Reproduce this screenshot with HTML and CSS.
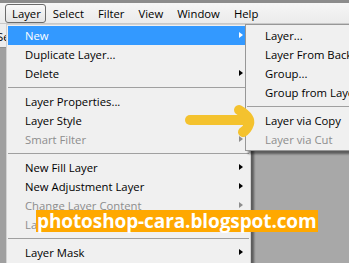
FILE: index.html
```html
<!DOCTYPE html>
<html lang="en">
<head>
  <meta charset="UTF-8">
  <meta name="viewport" content="width=device-width, initial-scale=1">
  <title>Layer menu</title>
  <link rel="stylesheet" href="styles.css">
</head>
<body>
  <div class="app">
    <div class="top-strip"></div>

    <nav class="menubar">
      <span class="menubar-item open">Layer</span>
      <span class="menubar-item">Select</span>
      <span class="menubar-item">Filter</span>
      <span class="menubar-item">View</span>
      <span class="menubar-item">Window</span>
      <span class="menubar-item">Help</span>
    </nav>

    <div class="workspace">
      <div class="side-panel">
        <div class="panel-tab">Se</div>
      </div>
      <div class="canvas-area"></div>
    </div>

    <!-- Layer menu -->
    <div class="menu menu-main">
      <div class="item active has-sub">New</div>
      <div class="item">Duplicate Layer...</div>
      <div class="item has-sub">Delete</div>
      <div class="sep"></div>
      <div class="item">Layer Properties...</div>
      <div class="item has-sub">Layer Style</div>
      <div class="item disabled has-sub">Smart Filter</div>
      <div class="sep"></div>
      <div class="item has-sub">New Fill Layer</div>
      <div class="item has-sub">New Adjustment Layer</div>
      <div class="item disabled has-sub">Change Layer Content</div>
      <div class="item disabled">Layer Content Options...</div>
      <div class="sep"></div>
      <div class="item has-sub">Layer Mask</div>
    </div>

    <!-- New submenu -->
    <div class="menu menu-sub">
      <div class="item">Layer...</div>
      <div class="item">Layer From Background...</div>
      <div class="item">Group...</div>
      <div class="item">Group from Layers...</div>
      <div class="sep"></div>
      <div class="item">Layer via Copy</div>
      <div class="item disabled">Layer via Cut</div>
    </div>

    <svg class="pointer" width="90" height="50" viewBox="180 100 90 50">
      <path d="M190 120 L246 120" />
      <path d="M239 110 Q251 117 249 124 Q247 130 243 132" />
    </svg>

    <div class="watermark">photoshop-cara.blogspot.com</div>
  </div>
</body>
</html>
```

FILE: styles.css
```css
body {
  margin: 0;
  font-family: 'Open Sans', 'Liberation Sans', Arial, sans-serif;
  font-size: 11.3px;
  color: #000;
}

.app {
  position: relative;
  width: 349px;
  height: 263px;
  overflow: hidden;
  display: flex;
  flex-direction: column;
  background: #a8a8a8;
}

.top-strip {
  height: 3px;
  background: #8c8c8c;
}

.menubar {
  height: 20px;
  display: flex;
  align-items: center;
  padding-left: 5px;
  background: linear-gradient(#f6f6f6, #ebebeb);
  border-bottom: 1px solid #c9c9c9;
}

.menubar-item {
  padding: 0 6px;
  line-height: 17px;
  border: 1px solid transparent;
  border-radius: 3px;
}

.menubar-item.open {
  padding-right: 4px;
  border-color: #6b6b6b;
  background: linear-gradient(#fafafa, #e4e4e4);
}

.workspace {
  flex: 1;
  display: flex;
}

.side-panel {
  width: 6px;
  background: #a0a0a0;
}

.panel-tab {
  height: 23px;
  line-height: 26px;
  text-indent: -3px;
  overflow: hidden;
  background: #ededed;
  border-bottom: 1px solid #8f8f8f;
}

.canvas-area {
  flex: 1;
  background: #a8a8a8;
}

/* drop-down menus */
.menu {
  position: absolute;
  top: 24px;
  padding: 1px;
  background: #f0f0f0;
  box-shadow: 3px 3px 2px rgba(0, 0, 0, 0.45);
}

.menu-main {
  left: 6px;
  width: 241px;
  border: 1px solid #d2d2d2;
}

.menu-sub {
  left: 245px;
  width: 150px;
  border: 1px solid #979797;
}

.item {
  position: relative;
  height: 19px;
  line-height: 19px;
  padding-left: 17px;
  white-space: nowrap;
}

.menu-sub .item {
  padding-left: 18px;
}

.item.disabled {
  color: #8d8d8d;
}

.item.active {
  background: #3399ff;
  color: #fff;
}

.item.has-sub::after {
  content: '';
  position: absolute;
  right: 6px;
  top: 6px;
  border-left: 4px solid #000;
  border-top: 3.5px solid transparent;
  border-bottom: 3.5px solid transparent;
}

.item.active.has-sub::after {
  border-left-color: #fff;
}

.item.disabled.has-sub::after {
  border-left-color: #8d8d8d;
}

.sep {
  height: 9px;
  position: relative;
}

.sep::before {
  content: '';
  position: absolute;
  left: 0;
  right: 0;
  top: 4px;
  border-top: 1px solid #a0a0a0;
}

.pointer {
  position: absolute;
  left: 180px;
  top: 100px;
  fill: none;
  stroke: #f4c22e;
  stroke-width: 10;
  stroke-linecap: round;
  stroke-linejoin: round;
}

.watermark {
  position: absolute;
  left: 36px;
  top: 210px;
  height: 22px;
  padding: 0 1px;
  line-height: 22px;
  background: #ffa800;
  color: #fff;
  font-size: 19px;
  font-weight: 700;
  letter-spacing: -0.1px;
}
```
